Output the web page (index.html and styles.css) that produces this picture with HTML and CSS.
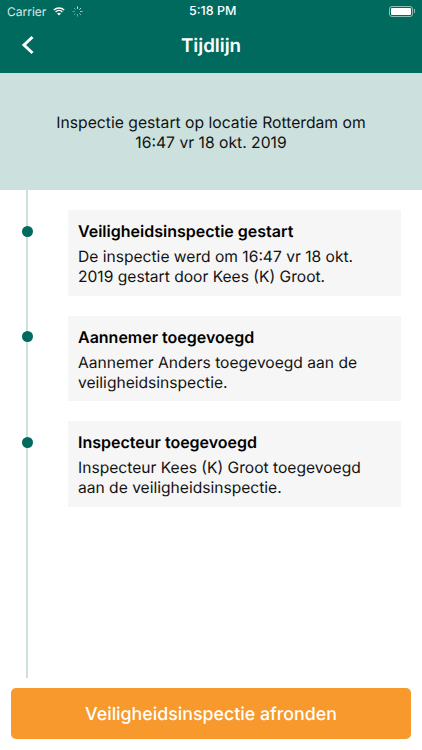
FILE: index.html
```html
<!DOCTYPE html>
<html lang="en">
<head>
    <meta charset="UTF-8" />
    <meta name="viewport" content="width=device-width, initial-scale=1.0" />
    <title>Tijdlijn</title>
    <link rel="stylesheet" href="styles.css">
</head>
<body>
    <div class="top">
        <div class="status-bar">
            <div class="status-left">
                <span>Carrier</span>
                <svg class="wifi" viewBox="0 0 16 12" width="14" height="10">
                    <path d="M8 11.5 L5.6 8.9 C6.9 7.7 9.1 7.7 10.4 8.9 Z" fill="#fff"/>
                    <path d="M1.8 4.9 C5.2 1.6 10.8 1.6 14.2 4.9" fill="none" stroke="#fff" stroke-width="1.7"/>
                    <path d="M3.9 7.1 C6.2 4.9 9.8 4.9 12.1 7.1" fill="none" stroke="#fff" stroke-width="1.7"/>
                </svg>
                <svg class="spinner" viewBox="0 0 12 12" width="11" height="11" stroke="#fff" stroke-width="1">
                    <path d="M6 0.5V3.2" opacity="0.9"/>
                    <path d="M9.9 2.1L8 4" opacity="0.8"/>
                    <path d="M11.5 6H8.8" opacity="0.7"/>
                    <path d="M9.9 9.9L8 8" opacity="0.6"/>
                    <path d="M6 11.5V8.8" opacity="0.5"/>
                    <path d="M2.1 9.9L4 8" opacity="0.4"/>
                    <path d="M0.5 6H3.2" opacity="0.4"/>
                    <path d="M2.1 2.1L4 4" opacity="0.5"/>
                </svg>
            </div>
            <div class="status-time">5:18 PM</div>
            <div class="status-right">
                <div class="battery"><div class="battery-fill"></div></div>
                <div class="battery-tip"></div>
            </div>
        </div>
        <div class="nav-bar">
            <svg class="back" viewBox="0 0 14 20" width="14" height="20">
                <path d="M11.5 2 L3 10 L11.5 18" fill="none" stroke="#fff" stroke-width="3"/>
            </svg>
            <div class="nav-title">Tijdlijn</div>
        </div>
    </div>

    <div class="banner">Inspectie gestart op locatie Rotterdam om<br>16:47 vr 18 okt. 2019</div>

    <div class="timeline">
        <div class="event">
            <div class="dot"></div>
            <div class="event-card">
                <div class="event-title">Veiligheidsinspectie gestart</div>
                <div class="event-text">De inspectie werd om 16:47 vr 18 okt.<br>2019 gestart door Kees (K) Groot.</div>
            </div>
        </div>
        <div class="event">
            <div class="dot"></div>
            <div class="event-card">
                <div class="event-title">Aannemer toegevoegd</div>
                <div class="event-text">Aannemer Anders toegevoegd aan de<br>veiligheidsinspectie.</div>
            </div>
        </div>
        <div class="event">
            <div class="dot"></div>
            <div class="event-card">
                <div class="event-title">Inspecteur toegevoegd</div>
                <div class="event-text">Inspecteur Kees (K) Groot toegevoegd<br>aan de veiligheidsinspectie.</div>
            </div>
        </div>
    </div>

    <div class="footer">
        <div class="finish-button">Veiligheidsinspectie afronden</div>
    </div>
</body>
</html>
```

FILE: styles.css
```css
/* Page */
body {
    font-family: Inter, 'Liberation Sans', sans-serif;
    text-rendering: geometricPrecision;
    background-color: #ffffff;
    color: #111111;
    margin: 0;
    width: 422px;
    height: 750px;
    overflow: hidden;
    display: flex;
    flex-direction: column;
}

/* Status bar + navigation */
.top {
    height: 73px;
    background-color: #006a5f;
    color: #ffffff;
    flex-shrink: 0;
}

.status-bar {
    height: 22px;
    display: flex;
    align-items: center;
    justify-content: space-between;
    padding: 0 7px;
    font-size: 12px;
    position: relative;
}

.status-left {
    display: flex;
    align-items: center;
    gap: 6px;
    color: #d8e8e5;
}

.status-time {
    font-weight: 500;
    font-size: 12.5px;
    position: absolute;
    left: 189px;
}

.status-right {
    display: flex;
    align-items: center;
}

.battery {
    width: 24px;
    height: 11px;
    box-sizing: border-box;
    border: 1px solid #8fbdb6;
    border-radius: 3px;
    padding: 1px;
}

.battery-fill {
    height: 100%;
    background-color: #ffffff;
    border-radius: 1px;
}

.battery-tip {
    width: 1px;
    height: 4px;
    margin-left: 1px;
    background-color: #8fbdb6;
}

.nav-bar {
    height: 47px;
    display: flex;
    align-items: center;
    justify-content: center;
    position: relative;
}

.back {
    position: absolute;
    left: 21px;
    top: 13px;
}

.nav-title {
    font-size: 18.8px;
    font-weight: 600;
}

/* Banner under the nav */
.banner {
    height: 117px;
    flex-shrink: 0;
    box-sizing: border-box;
    padding-top: 3px;
    background-color: #cce1de;
    display: flex;
    align-items: center;
    justify-content: center;
    text-align: center;
    font-size: 15.7px;
    line-height: 20px;
}

/* Timeline */
.timeline {
    height: 468px;
    flex-shrink: 0;
    margin-left: 26px;
    padding: 20px 21px 0 0;
    border-left: 2px solid #cce1de;
    display: flex;
    flex-direction: column;
    gap: 20px;
}

.event {
    display: flex;
    align-items: flex-start;
}

.dot {
    width: 11px;
    height: 11px;
    border-radius: 50%;
    background-color: #006a5f;
    margin: 15.5px 35px 0 -6.5px;
    flex-shrink: 0;
}

.event-card {
    flex: 1;
    background-color: #f6f6f6;
    padding: 11px 10px 9px 10.5px;
    height: 85.7px;
    box-sizing: border-box;
}

.event-title {
    font-size: 16px;
    font-weight: 600;
    line-height: 20px;
    margin-bottom: 6px;
    color: #000000;
}

.event-text {
    font-size: 15.6px;
    line-height: 20px;
}

/* Bottom button */
.footer {
    padding: 10px 11px 0;
}

.finish-button {
    height: 51px;
    box-sizing: border-box;
    padding-top: 1px;
    background-color: #f7992c;
    color: #ffffff;
    border-radius: 5px;
    display: flex;
    align-items: center;
    justify-content: center;
    font-size: 17.8px;
    font-weight: 500;
}
```
